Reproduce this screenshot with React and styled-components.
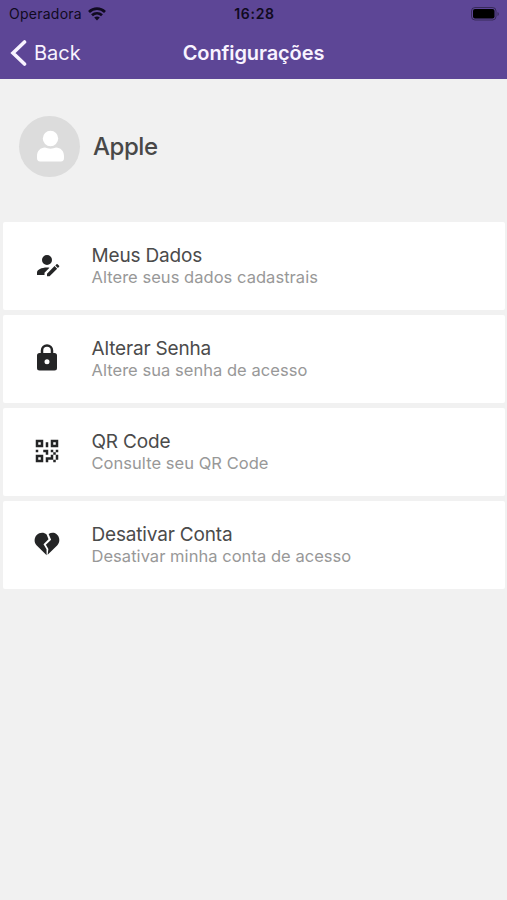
import styled, { createGlobalStyle } from 'styled-components';

const GlobalStyle = createGlobalStyle`
	* {
		box-sizing: border-box;
	}

	body {
		margin: 0;
		background-color: #f1f1f1;
		font-family: Inter, sans-serif;
	}
`;

const icons = {
	account:
		'M21.7 13.35l-1 1-2.05-2.05 1-1c.21-.21.56-.21.77 0l1.28 1.28c.21.21.21.56 0 .77M12 18.94l6.06-6.06 2.05 2.05L14.06 21H12v-2.06M12 14c-4.42 0-8 1.79-8 4v2h6v-1.89l4-4c-.66-.08-1.33-.11-2-.11m0-10a4 4 0 0 0-4 4 4 4 0 0 0 4 4 4 4 0 0 0 4-4 4 4 0 0 0-4-4z',
	lock: 'M12 17a2 2 0 0 0 2-2 2 2 0 0 0-2-2 2 2 0 0 0-2 2 2 2 0 0 0 2 2m6-9a2 2 0 0 1 2 2v10a2 2 0 0 1-2 2H6a2 2 0 0 1-2-2V10a2 2 0 0 1 2-2h1V6a5 5 0 0 1 5-5 5 5 0 0 1 5 5v2h1m-6-5a3 3 0 0 0-3 3v2h6V6a3 3 0 0 0-3-3z',
	qrcode:
		'M3 11h2v2H3v-2m8-6h2v4h-2V5m-2 6h4v4h-2v-2H9v-2m6 0h2v2h2v-2h2v2h-2v2h2v4h-2v2h-2v-2h-4v2h-2v-4h4v-2h2v-2h-2v-2m4 8v-4h-2v4h2M15 3h6v6h-6V3m2 2v2h2V5h-2M3 3h6v6H3V3m2 2v2h2V5H5M3 15h6v6H3v-6m2 2v2h2v-2H5z',
	heart: 'M11.7 21L3.8 13.1C1.5 10.8 1.6 6.9 3.8 4.7C6 2.6 9.6 2.5 11.7 4.3L13.2 8.2L9.2 12.2L11.6 16.2L11.7 21M12.5 20.6L13.1 16L11.1 12.5L15.3 8.5L13.3 4C15.6 2.6 18.6 2.8 20.3 4.7C22.4 6.9 22.4 10.8 20.1 13.1L12.5 20.6Z',
};

const items = [
	{ icon: 'account', title: 'Meus Dados', text: 'Altere seus dados cadastrais' },
	{ icon: 'lock', title: 'Alterar Senha', text: 'Altere sua senha de acesso' },
	{ icon: 'qrcode', title: 'QR Code', text: 'Consulte seu QR Code' },
	{ icon: 'heart', title: 'Desativar Conta', text: 'Desativar minha conta de acesso' },
];

const Header = styled.header`
	height: 79px;
	background-color: #5d4696;
`;

const StatusBar = styled.div`
	display: grid;
	grid-template-columns: 1fr auto 1fr;
	align-items: center;
	height: 27px;
	padding: 0 7px 0 9px;
	color: #100a20;
`;

const Carrier = styled.div`
	display: flex;
	align-items: center;
	gap: 6px;
	font-size: 14px;
	letter-spacing: 0.25px;
`;

const Clock = styled.div`
	font-size: 14px;
	font-weight: 600;
	letter-spacing: 0.7px;
`;

const BatteryIcon = styled.svg`
	justify-self: end;
`;

const NavBar = styled.nav`
	display: grid;
	grid-template-columns: 1fr auto 1fr;
	align-items: center;
	height: 51px;
	padding: 0 10px;
	color: #f8f3ff;
`;

const BackButton = styled.div`
	display: flex;
	align-items: center;
	gap: 7px;
	font-size: 20px;
`;

const Title = styled.h1`
	margin: 0;
	font-size: 20px;
	font-weight: 600;
	letter-spacing: -0.1px;
`;

const Profile = styled.section`
	display: flex;
	align-items: center;
	gap: 13px;
	height: 143px;
	padding: 0 19px 9px;
`;

const Avatar = styled.div`
	display: flex;
	align-items: center;
	justify-content: center;
	width: 61px;
	height: 61px;
	border-radius: 50%;
	background-color: #dcdcdc;
`;

const UserName = styled.div`
	color: #484848;
	font-size: 24px;
	font-weight: 500;
	letter-spacing: -0.45px;
`;

const Menu = styled.main`
	display: flex;
	flex-direction: column;
	gap: 5px;
	padding: 0 2px 0 3px;
`;

const MenuItem = styled.div`
	display: flex;
	align-items: center;
	gap: 29.5px;
	height: 88px;
	padding-left: 29px;
	border-radius: 2px;
	background-color: #fff;
`;

const ItemIcon = styled.svg`
	width: 30px;
	height: 30px;
	margin-bottom: 2px;
	fill: #242526;
`;

const ItemTitle = styled.div`
	color: #4b4b4b;
	font-size: 19px;
	line-height: 23px;
	letter-spacing: -0.17px;
`;

const ItemText = styled.div`
	color: #989898;
	font-size: 16.5px;
	line-height: 21px;
	letter-spacing: 0.04px;
`;

const App = () => (
	<>
		<GlobalStyle />
		<Header>
			<StatusBar>
				<Carrier>
					Operadora
					<svg width="18" height="14" viewBox="0 0 18 14" fill="none" stroke="currentColor" strokeWidth="2.7">
						<path d="M1 4.9C5.6.5 12.4.5 17 4.9M4 8.3c2.9-2.7 7.1-2.7 10 0" />
						<path d="M9 13.4L6.2 10.6c1.6-1.5 4-1.5 5.6 0z" fill="currentColor" stroke="none" />
					</svg>
				</Carrier>
				<Clock>16:28</Clock>
				<BatteryIcon width="29" height="14" viewBox="0 0 29 14">
					<rect x="0.5" y="0.5" width="24.5" height="12.5" rx="3.5" fill="none" stroke="#000" strokeOpacity="0.4" />
					<rect x="2" y="2" width="21.5" height="9.5" rx="2" fill="#000" />
					<path d="M26.5 5v4c1.8-.7 1.8-3.3 0-4z" fill="#000" fillOpacity="0.4" />
				</BatteryIcon>
			</StatusBar>
			<NavBar>
				<BackButton>
					<svg width="17" height="26" viewBox="0 0 17 26" fill="none" stroke="currentColor" strokeWidth="3.6">
						<path d="M14.5 2L3 13l11.5 11" strokeLinecap="round" />
					</svg>
					Back
				</BackButton>
				<Title>Configurações</Title>
			</NavBar>
		</Header>
		<Profile>
			<Avatar>
				<svg width="28" height="32" viewBox="-1 0 28 32" fill="#fff">
					<circle cx="13.5" cy="8.5" r="7.7" />
					<path d="M0 28v-2c0-5 3.5-8.5 8-8.5 3.5 1.5 7.5 1.5 11 0 4.5 0 8 3.5 8 8.5v2c0 2-1 3.5-3 3.5H3c-2 0-3-1.5-3-3.5z" />
				</svg>
			</Avatar>
			<UserName>Apple</UserName>
		</Profile>
		<Menu>
			{items.map(({ icon, title, text }) => (
				<MenuItem key={icon}>
					<ItemIcon viewBox="0 0 24 24">
						<path d={icons[icon]} fillRule="evenodd" />
					</ItemIcon>
					<div>
						<ItemTitle>{title}</ItemTitle>
						<ItemText>{text}</ItemText>
					</div>
				</MenuItem>
			))}
		</Menu>
	</>
);

export default App;
